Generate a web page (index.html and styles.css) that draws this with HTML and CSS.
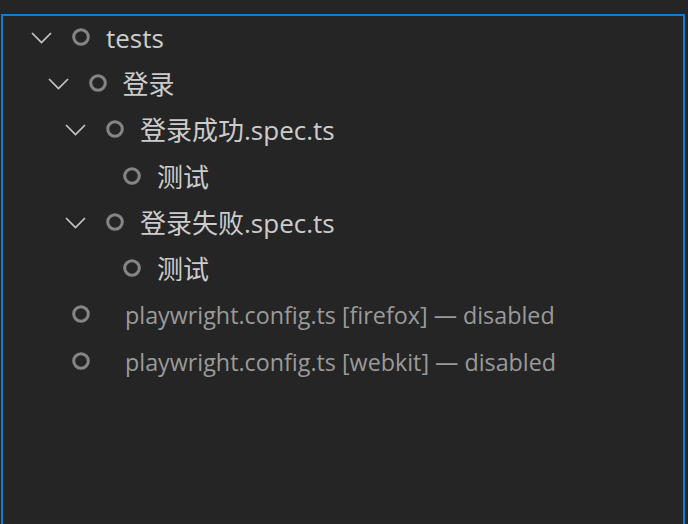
FILE: index.html
```html
<!DOCTYPE html>
<html lang="zh">
<head>
<meta charset="utf-8">
<title>Test Explorer</title>
<link rel="stylesheet" href="styles.css">
</head>
<body>
<div class="tree">
  <div class="row lvl0">
    <span class="twistie"><svg viewBox="0 0 21 12" width="21" height="12"><polyline points="1,1 10.5,10.5 20,1"/></svg></span>
    <span class="status"><svg viewBox="0 0 18 18" width="18" height="18"><circle cx="9" cy="9" r="7.3"/></svg></span>
    <span class="label">tests</span>
  </div>
  <div class="row lvl1">
    <span class="twistie"><svg viewBox="0 0 21 12" width="21" height="12"><polyline points="1,1 10.5,10.5 20,1"/></svg></span>
    <span class="status"><svg viewBox="0 0 18 18" width="18" height="18"><circle cx="9" cy="9" r="7.3"/></svg></span>
    <span class="label">登录</span>
  </div>
  <div class="row lvl2">
    <span class="twistie"><svg viewBox="0 0 21 12" width="21" height="12"><polyline points="1,1 10.5,10.5 20,1"/></svg></span>
    <span class="status"><svg viewBox="0 0 18 18" width="18" height="18"><circle cx="9" cy="9" r="7.3"/></svg></span>
    <span class="label">登录成功.spec.ts</span>
  </div>
  <div class="row lvl3">
    <span class="twistie"></span>
    <span class="status"><svg viewBox="0 0 18 18" width="18" height="18"><circle cx="9" cy="9" r="7.3"/></svg></span>
    <span class="label">测试</span>
  </div>
  <div class="row lvl2">
    <span class="twistie"><svg viewBox="0 0 21 12" width="21" height="12"><polyline points="1,1 10.5,10.5 20,1"/></svg></span>
    <span class="status"><svg viewBox="0 0 18 18" width="18" height="18"><circle cx="9" cy="9" r="7.3"/></svg></span>
    <span class="label">登录失败.spec.ts</span>
  </div>
  <div class="row lvl3">
    <span class="twistie"></span>
    <span class="status"><svg viewBox="0 0 18 18" width="18" height="18"><circle cx="9" cy="9" r="7.3"/></svg></span>
    <span class="label">测试</span>
  </div>
  <div class="row lvl0 disabled">
    <span class="twistie"></span>
    <span class="status"><svg viewBox="0 0 18 18" width="18" height="18"><circle cx="9" cy="9" r="7.3"/></svg></span>
    <span class="label">playwright.config.ts [firefox] — disabled</span>
  </div>
  <div class="row lvl0 disabled">
    <span class="twistie"></span>
    <span class="status"><svg viewBox="0 0 18 18" width="18" height="18"><circle cx="9" cy="9" r="7.3"/></svg></span>
    <span class="label">playwright.config.ts [webkit] — disabled</span>
  </div>
</div>
</body>
</html>
```
FILE: styles.css
```css
html, body {
  margin: 0;
  padding: 0;
  height: 100%;
  background: #252526;
  overflow: hidden;
}
body {
  padding-top: 14px;
  box-sizing: border-box;
  font-family: "Open Sans", "Noto Sans CJK SC", sans-serif;
  color: #cccccc;
}
.tree {
  margin: 0 3px 0 1px;
  height: 100%;
  border: 2px solid #0a7fd6;
  border-bottom: none;
  box-sizing: border-box;
  padding-top: 0;
}
.row {
  display: flex;
  align-items: center;
  height: 46.3px;
  white-space: nowrap;
}
.lvl0 { padding-left: 28px; }
.lvl1 { padding-left: 44.5px; }
.lvl2 { padding-left: 62px; }
.lvl3 { padding-left: 79px; }
.twistie {
  width: 21px;
  height: 12px;
  flex: none;
  display: flex;
  margin-top: -3px;
}
.twistie svg {
  fill: none;
  stroke: #c5c5c5;
  stroke-width: 1.7;
}
.status {
  width: 18px;
  height: 18px;
  flex: none;
  margin-left: 20px;
  display: flex;
  margin-top: -5px;
}
.status svg {
  fill: none;
  stroke: #858585;
  stroke-width: 3;
}
.label {
  margin-left: 16px;
  margin-top: -3px;
  font-size: 26px;
  line-height: 30px;
}
.disabled .label {
  margin-left: 35px;
  font-size: 23.3px;
  color: #9a9a9a;
}
```
